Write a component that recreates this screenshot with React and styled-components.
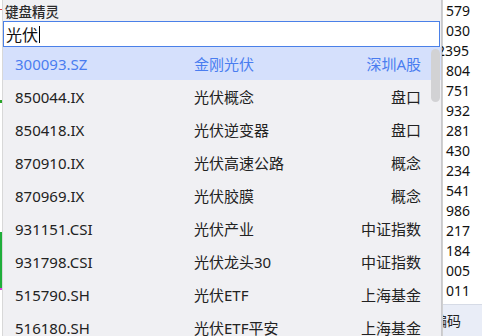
import React from "react";
import styled, { createGlobalStyle } from "styled-components";

const Global = createGlobalStyle`
  html, body { margin: 0; padding: 0; background: #fff; }
  body { font-family: "Noto Sans", "Noto Sans CJK SC", sans-serif; overflow: hidden; }
`;

const Page = styled.div`
  position: relative;
  width: 482px;
  height: 336px;
  overflow: hidden;
  display: grid;
  grid-template-columns: 3px 1fr 40px;
  background: #fff;
`;

const LeftStrip = styled.div`
  position: relative;
  border-right: 1px solid #d8d8d8;
  box-sizing: border-box;
`;

const Mark = styled.div`
  position: absolute;
  left: 0;
  width: 2px;
  top: ${(p) => p.$top}px;
  height: ${(p) => p.$h}px;
  background: ${(p) => p.$c};
`;

const Middle = styled.div``;

const RightCol = styled.div`
  display: flex;
  flex-direction: column;
  border-left: 1px solid #d0d0d0;
`;

const Nums = styled.div`
  flex: 1;
  padding: 1px 0 0 3px;
  font-family: "Noto Sans", sans-serif;
  font-size: 14px;
  line-height: 20px;
  color: #111;
  white-space: nowrap;
`;

const Num = styled.div`
  margin-left: ${(p) => (p.$wide ? -9 : 0)}px;
`;

const Band = styled.div`
  height: 31px;
  border-top: 1px solid #d6dbe6;
  background: #e9edf7;
  font-family: "Noto Sans CJK SC", sans-serif;
  font-size: 14px;
  line-height: 31px;
  color: #222;
  white-space: nowrap;
  overflow: hidden;
  text-indent: -10px;
`;

const Popup = styled.div`
  position: absolute;
  left: 3px;
  top: 0;
  width: 438px;
  height: 336px;
  background: #f0f0f3;
  border-right: 1px solid #c9c9cd;
  display: flex;
  flex-direction: column;
  overflow: hidden;
`;

const Title = styled.div`
  height: 21px;
  padding-left: 2px;
  font-family: "Noto Sans CJK SC", sans-serif;
  font-size: 13.5px;
  font-weight: 500;
  line-height: 22px;
  color: #2a2a2a;
`;

const Input = styled.div`
  height: 27px;
  box-sizing: border-box;
  border: 1px solid #4a80e8;
  background: #fff;
  margin-right: 1px;
  display: flex;
  align-items: center;
  padding-left: 2px;
  font-family: "Noto Sans CJK SC", sans-serif;
  font-size: 16px;
  color: #111;
`;

const Caret = styled.span`
  display: inline-block;
  width: 1px;
  height: 17px;
  margin-left: 1px;
  background: #000;
`;

const ListWrap = styled.div`
  position: relative;
  flex: 1;
`;

const Row = styled.div`
  height: 33px;
  display: grid;
  grid-template-columns: 179px 1fr 120px;
  align-items: center;
  padding: 0 20px 0 12px;
  background: ${(p) => (p.$active ? "#d5e0fc" : "transparent")};
  color: ${(p) => (p.$active ? "#4a7df0" : "#222")};
  font-size: 15px;
`;

const Code = styled.span`
  font-family: "Noto Sans", sans-serif;
`;

const Name = styled.span`
  font-family: "Noto Sans", "Noto Sans CJK SC", sans-serif;
`;

const Kind = styled.span`
  font-family: "Noto Sans", "Noto Sans CJK SC", sans-serif;
  text-align: right;
`;

const Scroll = styled.div`
  position: absolute;
  right: 1px;
  top: 2px;
  width: 9px;
  height: 53px;
  border-radius: 5px;
  background: #d2d2d4;
`;

const rows = [
  ["300093.SZ", "金刚光伏", "深圳A股"],
  ["850044.IX", "光伏概念", "盘口"],
  ["850418.IX", "光伏逆变器", "盘口"],
  ["870910.IX", "光伏高速公路", "概念"],
  ["870969.IX", "光伏胶膜", "概念"],
  ["931151.CSI", "光伏产业", "中证指数"],
  ["931798.CSI", "光伏龙头30", "中证指数"],
  ["515790.SH", "光伏ETF", "上海基金"],
  ["516180.SH", "光伏ETF平安", "上海基金"],
];

const nums = ["579", "030", "2395", "804", "751", "932", "281", "430", "234", "541", "986", "217", "184", "005", "011"];

export default function App() {
  return (
    <>
      <Global />
      <Page>
        <LeftStrip>
          <Mark $top={9} $h={1} $c="#e04040" />
          <Mark $top={100} $h={3} $c="#2aa52a" />
          <Mark $top={232} $h={56} $c="#1fae3a" />
          <Mark $top={288} $h={2} $c="#e040e0" />
        </LeftStrip>
        <Middle />
        <RightCol>
          <Nums>
            {nums.map((n, i) => (
              <Num key={i} $wide={n.length > 3}>{n}</Num>
            ))}
          </Nums>
          <Band>编码</Band>
        </RightCol>
        <Popup>
          <Title>键盘精灵</Title>
          <Input>
            光伏<Caret />
          </Input>
          <ListWrap>
            {rows.map((r, i) => (
              <Row key={r[0]} $active={i === 0}>
                <Code>{r[0]}</Code>
                <Name>{r[1]}</Name>
                <Kind>{r[2]}</Kind>
              </Row>
            ))}
            <Scroll />
          </ListWrap>
        </Popup>
      </Page>
    </>
  );
}
